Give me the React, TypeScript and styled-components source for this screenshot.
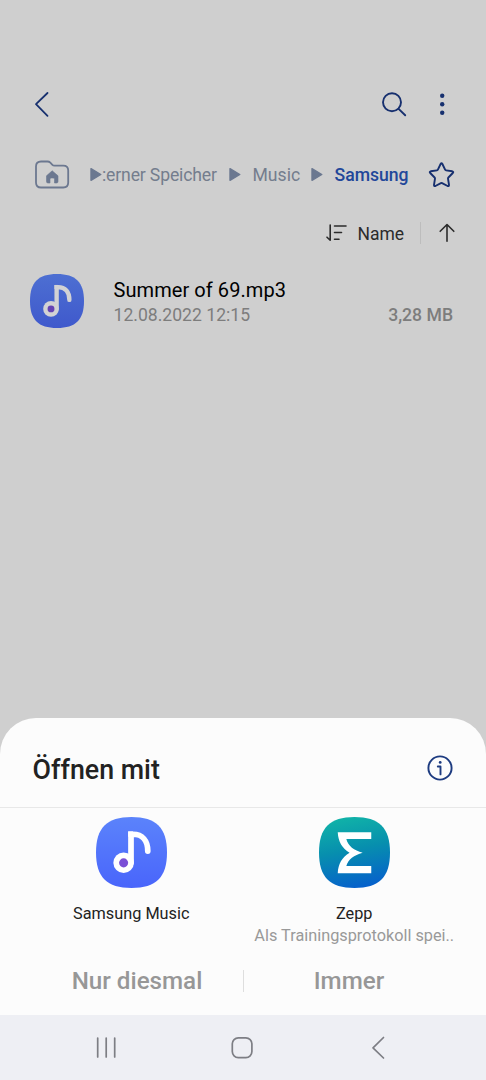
import React from "react";
import styled, { createGlobalStyle } from "styled-components";

const GlobalStyle = createGlobalStyle`
  * { box-sizing: border-box; }
  body { margin: 0; background: #cfcfcf; }
  svg { display: block; flex: none; overflow: visible; }
`;

const Screen = styled.div`
  width: 486px;
  height: 1080px;
  display: flex;
  flex-direction: column;
  overflow: hidden;
  background: #cfcfcf;
  font-family: Roboto, "Liberation Sans", sans-serif;
  color: #000;
`;

const IconButton = styled.button`
  display: flex;
  padding: 0;
  border: 0;
  background: none;
  color: inherit;
`;

const Toolbar = styled.header`
  display: flex;
  align-items: center;
  height: 42px;
  margin-top: 83px;
  padding: 0 37px 0 31px;
  color: #17306f;
`;

const ToolbarActions = styled.div`
  display: flex;
  align-items: center;
  gap: 28px;
  margin-left: auto;
`;

const Breadcrumbs = styled.nav`
  display: flex;
  align-items: center;
  height: 40px;
  margin-top: 30px;
  padding-left: 35px;
  color: #6c7890;
`;

const Crumb = styled.span<{ $width: number; $current?: boolean; $spacing?: number }>`
  flex: none;
  width: ${(p) => p.$width}px;
  font-size: 17.6px;
  line-height: 24px;
  letter-spacing: ${(p) => p.$spacing ?? 0}px;
  white-space: nowrap;
  font-weight: ${(p) => (p.$current ? 500 : 400)};
  color: ${(p) => (p.$current ? "#22479a" : "#747d8d")};
`;

const SortBar = styled.div`
  display: flex;
  align-items: center;
  justify-content: flex-end;
  height: 36px;
  margin-top: 20px;
  padding-right: 31px;
  color: #2b2b2b;
`;

const SortLabel = styled.span`
  width: 63px;
  padding: 1px 0 0 10.5px;
  font-size: 17.5px;
  line-height: 24px;
`;

const Separator = styled.span<{ $color: string; $height: number }>`
  width: 1px;
  height: ${(p) => p.$height}px;
  background: ${(p) => p.$color};
`;

const FileRow = styled.div`
  display: flex;
  align-items: center;
  height: 54px;
  margin-top: 22.5px;
  padding: 0 33px 0 30px;
`;

const FileText = styled.div`
  display: flex;
  flex: 1;
  flex-direction: column;
  margin-left: 29.5px;
  padding-top: 2px;
`;

const FileName = styled.span`
  font-size: 20px;
  line-height: 26px;
  letter-spacing: 0.07px;
`;

const FileMeta = styled.div`
  display: flex;
  justify-content: space-between;
  font-size: 17.6px;
  line-height: 24px;
  color: #7d7d7d;
`;

const FileSize = styled.span`
  font-weight: 500;
`;

const Sheet = styled.section`
  display: flex;
  flex-direction: column;
  height: 297.5px;
  margin-top: auto;
  border-radius: 36px 36px 0 0;
  background: #fcfcfc;
`;

const SheetHeader = styled.div`
  display: flex;
  align-items: center;
  justify-content: space-between;
  height: 90px;
  padding: 12px 33px 0 32.5px;
  border-bottom: 1px solid #e8e8e8;
  color: #1d3b80;
`;

const SheetTitle = styled.h1`
  margin: 0;
  padding-top: 3px;
  font-size: 26.8px;
  line-height: 32px;
  font-weight: 500;
  color: #222;
`;

const AppList = styled.div`
  display: grid;
  grid-template-columns: 223px 223px;
  justify-content: center;
  height: 138px;
  padding: 9px 0.5px 0 0;
`;

const AppOption = styled.button`
  display: flex;
  flex-direction: column;
  align-items: center;
  padding: 0;
  border: 0;
  background: none;
  font-family: inherit;
`;

const AppName = styled.span`
  margin-top: 15px;
  font-size: 16.3px;
  line-height: 22px;
  color: #222;
`;

const AppDetail = styled.span`
  font-size: 16.3px;
  line-height: 22px;
  white-space: nowrap;
  color: #999;
`;

const Actions = styled.div`
  display: flex;
  align-items: center;
  height: 69.5px;
  padding: 2px 31.5px 0 31.5px;
`;

const ActionButton = styled.button`
  flex: 1;
  padding: 0;
  border: 0;
  background: none;
  font: 500 24.2px/30px Roboto, "Liberation Sans", sans-serif;
  color: #979797;
`;

const NavBar = styled.footer`
  display: flex;
  align-items: center;
  height: 65px;
  padding: 0 101px 0 96px;
  background: #eeeff4;
  color: #7d7e84;
`;

const Arrow = () => (
  <svg width="12" height="14" viewBox="0 0 12 14">
    <path d="M1 .7v11.6L10.8 6.5z" fill="#6b7890" stroke="#6b7890" strokeWidth="1.4" strokeLinejoin="round" />
  </svg>
);

const Gap = styled.span<{ $size: number }>`
  flex: none;
  width: ${(p) => p.$size}px;
`;

const squircle = "M36 0C61 0 72 11 72 36S61 72 36 72 0 61 0 36 11 0 36 0Z";

interface MusicIconProps {
  size: number;
  top: string;
  bottom: string;
  note: string;
  dot: string;
  id: string;
}

const MusicIcon = ({ size, top, bottom, note, dot, id }: MusicIconProps) => (
  <svg width={size} height={size} viewBox="0 0 72 72">
    <defs>
      <linearGradient id={id} x1="0" y1="0" x2="0" y2="1">
        <stop offset="0" stopColor={top} />
        <stop offset="1" stopColor={bottom} />
      </linearGradient>
    </defs>
    <path d={squircle} fill={`url(#${id})`} />
    <path d="M35.500 46.500V17.500H37.500C47 17.500 52.500 24 52.500 34.500" fill="none" stroke={note} strokeWidth="5.800" strokeLinecap="round" />
    <path d="M32.600 14.600H37.500V20H32.600Z" fill={note} />
    <circle cx="28" cy="46.500" r="10.400" fill={note} />
    <circle cx="28" cy="46.500" r="4.600" fill={dot} />
  </svg>
);

const ZeppIcon = () => (
  <svg width="71" height="71" viewBox="0 0 72 72">
    <defs>
      <linearGradient id="zepp" x1="0.4" y1="0" x2="0.6" y2="1">
        <stop offset="0" stopColor="#10b2a8" />
        <stop offset="0.45" stopColor="#078fae" />
        <stop offset="1" stopColor="#0660cc" />
      </linearGradient>
    </defs>
    <path d={squircle} fill="url(#zepp)" />
    <path
      d="M19 15.500H53V22.300H27.700C29.500 29.500 35.500 33.800 44.300 36.200C35.500 38.600 29.500 43 27.700 49.800H53V57H19C19.500 47.500 23.500 40.500 31 36.200C23.500 32 19.500 25 19 15.500Z"
      fill="#fff"
    />
  </svg>
);

export default function App() {
  return (
    <Screen>
      <GlobalStyle />
      <Toolbar>
        <IconButton aria-label="Zurück">
          <svg width="20" height="26" viewBox="0 0 20 26" fill="none" stroke="currentColor" strokeWidth="1.800" strokeLinecap="round" strokeLinejoin="round">
            <path d="M16.500 2L5 13.200L16.500 24.800" />
          </svg>
        </IconButton>
        <ToolbarActions>
          <IconButton aria-label="Suchen">
            <svg width="26" height="26" viewBox="0 0 26 26" fill="none" stroke="currentColor" strokeWidth="1.900" strokeLinecap="round">
              <circle cx="11" cy="11.300" r="9" />
              <path d="M17.600 17.900L24.200 24.300" />
            </svg>
          </IconButton>
          <IconButton aria-label="Mehr">
            <svg width="14" height="26" viewBox="0 0 14 26" fill="currentColor">
              <circle cx="7.200" cy="4.800" r="2.200" />
              <circle cx="7.200" cy="13.300" r="2.200" />
              <circle cx="7.200" cy="21.800" r="2.200" />
            </svg>
          </IconButton>
        </ToolbarActions>
      </Toolbar>

      <Breadcrumbs>
        <IconButton aria-label="Start">
          <svg width="34" height="28" viewBox="0 0 34 28">
            <path
              d="M6 .5H12.500C13.800 .5 14.500 .9 15.300 1.700L17.400 3.800C18 4.400 18.500 4.600 19.500 4.600H28.300Q33.200 4.600 33.200 9.500V21.500Q33.200 26.500 28.300 26.500H6Q1 26.500 1 21.500V5.500Q1 .5 6 .5Z"
              fill="none"
              stroke="currentColor"
              strokeWidth="1.800"
            />
            <path d="M17.200 9.800L23 14.800V20.500Q23 22 21.500 22H19.500V18.300Q19.500 17 18.300 17H16.200Q15 17 15 18.300V22H13Q11.500 22 11.500 20.500V14.800Z" fill="currentColor" stroke="currentColor" strokeWidth="0.600" strokeLinejoin="round" />
          </svg>
        </IconButton>
        <Gap $size={20.5} />
        <Arrow />
        <Gap $size={0.5} />
        <Crumb $width={127} $spacing={-0.15}>:erner Speicher</Crumb>
        <Arrow />
        <Gap $size={11.5} />
        <Crumb $width={58.5}>Music</Crumb>
        <Arrow />
        <Gap $size={11.5} />
        <Crumb $width={94}>
          <Crumb as="strong" $width={94} $current>Samsung</Crumb>
        </Crumb>
        <IconButton aria-label="Favorit">
          <svg width="26" height="26" viewBox="0 0 26 26" fill="none" stroke="#17306f" strokeWidth="1.900" strokeLinejoin="round">
            <path d="M11.600 2Q12.500 .6 13.400 2L16.100 7.700Q16.400 8.300 17.100 8.400L23.300 9.300Q24.900 9.700 23.800 11L19.400 15.500Q18.900 16 19 16.700L20 22.900Q20.100 24.600 18.600 24L13.100 21.100Q12.500 20.800 11.900 21.100L6.400 24Q4.900 24.600 5 22.900L6 16.700Q6.100 16 5.600 15.500L1.200 11Q.1 9.700 1.700 9.300L7.900 8.400Q8.600 8.300 8.900 7.700Z" />
          </svg>
        </IconButton>
      </Breadcrumbs>

      <SortBar>
        <svg width="21" height="18" viewBox="0 0 21 18" fill="none" stroke="currentColor" strokeWidth="1.600" strokeLinecap="round" strokeLinejoin="round">
          <path d="M4.200 1V16.300L1 13.200M8.500 2H20M8.500 8.500H15.500M8.500 15.200H13" />
        </svg>
        <SortLabel>Name</SortLabel>
        <Gap $size={10} />
        <Separator $color="#bdbdbd" $height={22} />
        <Gap $size={18} />
        <IconButton aria-label="Aufsteigend">
          <svg width="16" height="20" viewBox="0 0 16 20" fill="none" stroke="currentColor" strokeWidth="1.600" strokeLinecap="round" strokeLinejoin="round">
            <path d="M8 18.200V1.500M1.200 8.300L8 1.500L14.800 8.300" />
          </svg>
        </IconButton>
      </SortBar>

      <FileRow>
        <MusicIcon id="file-music" size={54} top="#4d6fd2" bottom="#3f59cc" note="#d2d2d4" dot="#6542b4" />
        <FileText>
          <FileName>Summer of 69.mp3</FileName>
          <FileMeta>
            <span>12.08.2022 12:15</span>
            <FileSize>3,28 MB</FileSize>
          </FileMeta>
        </FileText>
      </FileRow>

      <Sheet>
        <SheetHeader>
          <SheetTitle>Öffnen mit</SheetTitle>
          <IconButton aria-label="Info">
            <svg width="26" height="26" viewBox="0 0 26 26" fill="none" stroke="currentColor" strokeWidth="1.900" strokeLinecap="round" strokeLinejoin="round">
              <circle cx="13" cy="13" r="11.600" />
              <path d="M10.800 11.500H13.500V19.400" />
              <circle cx="13.200" cy="7.400" r="1.400" fill="currentColor" stroke="none" />
            </svg>
          </IconButton>
        </SheetHeader>
        <AppList>
          <AppOption>
            <MusicIcon id="app-music" size={71} top="#5b83fb" bottom="#4965fb" note="#fff" dot="#7b4fd6" />
            <AppName>Samsung Music</AppName>
          </AppOption>
          <AppOption>
            <ZeppIcon />
            <AppName>Zepp</AppName>
            <AppDetail>Als Trainingsprotokoll spei..</AppDetail>
          </AppOption>
        </AppList>
        <Actions>
          <ActionButton>Nur diesmal</ActionButton>
          <Separator $color="#dedede" $height={22} />
          <ActionButton>Immer</ActionButton>
        </Actions>
      </Sheet>

      <NavBar>
        <IconButton aria-label="Letzte Apps">
          <svg width="20" height="22" viewBox="0 0 20 22" fill="none" stroke="currentColor" strokeWidth="1.700" strokeLinecap="round">
            <path d="M1.700 1V20M10.200 1V20M18.700 1V20" />
          </svg>
        </IconButton>
        <Gap $size={115} />
        <IconButton aria-label="Startbildschirm">
          <svg width="22" height="22" viewBox="0 0 22 22" fill="none" stroke="currentColor" strokeWidth="1.700">
            <rect x="1.300" y="0.800" width="19.600" height="19.800" rx="6" />
          </svg>
        </IconButton>
        <Gap $size={118} />
        <IconButton aria-label="Zurück">
          <svg width="14" height="22" viewBox="0 0 14 22" fill="none" stroke="currentColor" strokeWidth="1.700" strokeLinecap="round" strokeLinejoin="round">
            <path d="M12.500 .5L2 10.800L12.500 21" />
          </svg>
        </IconButton>
      </NavBar>
    </Screen>
  );
}
